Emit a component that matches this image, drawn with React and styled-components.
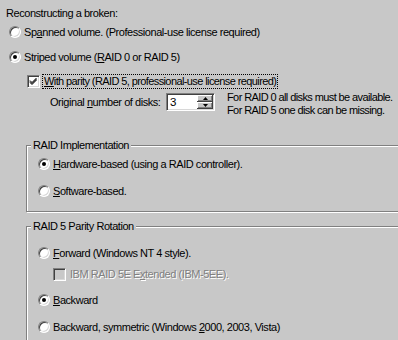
import styled, { createGlobalStyle } from 'styled-components';

const Global = createGlobalStyle`
  html, body { margin: 0; padding: 0; background: #c8c8c8; }
`;

const Page = styled.div`
  width: 398px;
  height: 340px;
  overflow: hidden;
  box-sizing: border-box;
  padding: 7px 0 0 6px;
  background: #c8c8c8;
  color: #000;
  font-family: "Liberation Sans", Arial, sans-serif;
  font-size: 11px;
  letter-spacing: -0.45px;
  display: flex;
  flex-direction: column;
`;

const Row = styled.div`
  display: flex;
  align-items: center;
  height: ${p => p.h || 14}px;
  margin-top: ${p => p.top || 0}px;
  margin-left: ${p => p.indent || 0}px;
  gap: ${p => p.gap ?? 3}px;
  white-space: nowrap;
`;

const Key = styled.span`
  text-decoration: underline;
  text-underline-offset: 1px;
`;

const Radio = styled.span`
  position: relative;
  flex: none;
  width: 12px;
  height: 12px;
  box-sizing: border-box;
  border-radius: 50%;
  background: #fff;
  border: 1px solid;
  border-color: #808080 #fff #fff #808080;
  box-shadow: inset 1px 1px 0 #404040, inset -1px -1px 0 #d8d8d8;

  &::after {
    content: '';
    display: ${p => (p.checked ? 'block' : 'none')};
    position: absolute;
    left: 3px;
    top: 3px;
    width: 4px;
    height: 4px;
    border-radius: 50%;
    background: #000;
  }
`;

const Box = styled.span`
  flex: none;
  display: flex;
  width: 13px;
  height: 13px;
  box-sizing: border-box;
  background: ${p => (p.disabled ? '#c8c8c8' : '#fff')};
  border: 1px solid;
  border-color: #808080 #fff #fff #808080;
  box-shadow: inset 1px 1px 0 #404040, inset -1px -1px 0 #d8d8d8;
`;

const Focus = styled.span`
  border: 1px dotted #000;
  padding: 0 1px;
  line-height: 13px;
  letter-spacing: -0.6px;
`;

const Disabled = styled.span`
  color: #808080;
  text-shadow: 1px 1px 0 #fff;
`;

const DiskRow = styled.div`
  display: flex;
  align-items: flex-start;
  margin: 4px 0 0 44px;
  white-space: nowrap;
`;

const DiskLabel = styled.span`
  width: 116px;
  line-height: 18px;
`;

const Spin = styled.div`
  display: flex;
  width: 49px;
  height: 18px;
  box-sizing: border-box;
  background: #fff;
  border: 1px solid;
  border-color: #808080 #fff #fff #808080;
  box-shadow: inset 1px 1px 0 #404040, inset -1px -1px 0 #d8d8d8;
  padding: 1px;
`;

const SpinValue = styled.span`
  flex: 1;
  padding-left: 2px;
  font-size: 11.5px;
  line-height: 14px;
`;

const SpinButtons = styled.div`
  display: flex;
  flex-direction: column;
  width: 16px;
`;

const SpinButton = styled.span`
  flex: 1;
  display: flex;
  align-items: center;
  justify-content: center;
  background: #c8c8c8;
  box-shadow: inset -1px -1px 0 #404040, inset 1px 1px 0 #fff, inset -2px -2px 0 #808080;
`;

const Note = styled.div`
  margin: -2px 0 0 12px;
  line-height: 13px;
  letter-spacing: -0.6px;
`;

const Group = styled.div`
  position: relative;
  margin: ${p => p.top}px -40px 0 20px;
  padding: ${p => p.pad}px 0 ${p => p.bottom || 0}px 11px;
  border: 1px solid #808080;
  box-shadow: inset 1px 1px 0 #fff, 1px 1px 0 #fff;
  display: flex;
  flex-direction: column;
`;

const GroupTitle = styled.span`
  position: absolute;
  left: 4px;
  top: -8px;
  padding: 0 2px;
  line-height: 14px;
  background: #c8c8c8;
  white-space: nowrap;
`;

const Check = () => (
  <svg width="11" height="11" viewBox="0 0 11 11">
    <path d="M2 4.5 L4 6.5 L8.5 2 M2 5.5 L4 7.5 L8.5 3 M2 6.5 L4 8.5 L8.5 4" stroke="#000" strokeWidth="1" fill="none" />
  </svg>
);

const Arrow = ({ up }) => (
  <svg width="5" height="3" viewBox="0 0 5 3">
    <path d={up ? 'M0 3 L2.5 0 L5 3Z' : 'M0 0 L2.5 3 L5 0Z'} fill="#000" />
  </svg>
);

export default function App() {
  return (
    <Page>
      <Global />
      <Row>Reconstructing a broken:</Row>

      <Row top={7} indent={3}>
        <Radio />
        <span>Sp<Key>a</Key>nned volume. (Professional-use license required)</span>
      </Row>

      <Row top={13} indent={3}>
        <Radio checked />
        <span>Striped volume (<Key>R</Key>AID 0 or RAID 5)</span>
      </Row>

      <Row top={11} h={15} indent={21} gap={2}>
        <Box><Check /></Box>
        <Focus><Key>W</Key>ith parity (RAID 5, professional-use license required)</Focus>
      </Row>

      <DiskRow>
        <DiskLabel>Original <Key>n</Key>umber of disks:</DiskLabel>
        <Spin>
          <SpinValue>3</SpinValue>
          <SpinButtons>
            <SpinButton><Arrow up /></SpinButton>
            <SpinButton><Arrow /></SpinButton>
          </SpinButtons>
        </Spin>
        <Note>
          For RAID 0 all disks must be available.<br />
          For RAID 5 one disk can be missing.
        </Note>
      </DiskRow>

      <Group top={28} pad={11} bottom={13}>
        <GroupTitle>RAID Implementation</GroupTitle>
        <Row>
          <Radio checked />
          <span><Key>H</Key>ardware-based (using a RAID controller).</span>
        </Row>
        <Row top={13}>
          <Radio />
          <span><Key>S</Key>oftware-based.</span>
        </Row>
      </Group>

      <Group top={14} pad={19} bottom={20}>
        <GroupTitle>RAID 5 Parity Rotation</GroupTitle>
        <Row>
          <Radio />
          <span><Key>F</Key>orward (Windows NT 4 style).</span>
        </Row>
        <Row top={7} indent={15} gap={4}>
          <Box disabled />
          <Disabled>IBM RAID 5E E<Key>x</Key>tended (IBM-5EE).</Disabled>
        </Row>
        <Row top={12}>
          <Radio checked />
          <span><Key>B</Key>ackward</span>
        </Row>
        <Row top={13}>
          <Radio />
          <span>Backward, symmetric (Windows <Key>2</Key>000, 2003, Vista)</span>
        </Row>
      </Group>
    </Page>
  );
}
